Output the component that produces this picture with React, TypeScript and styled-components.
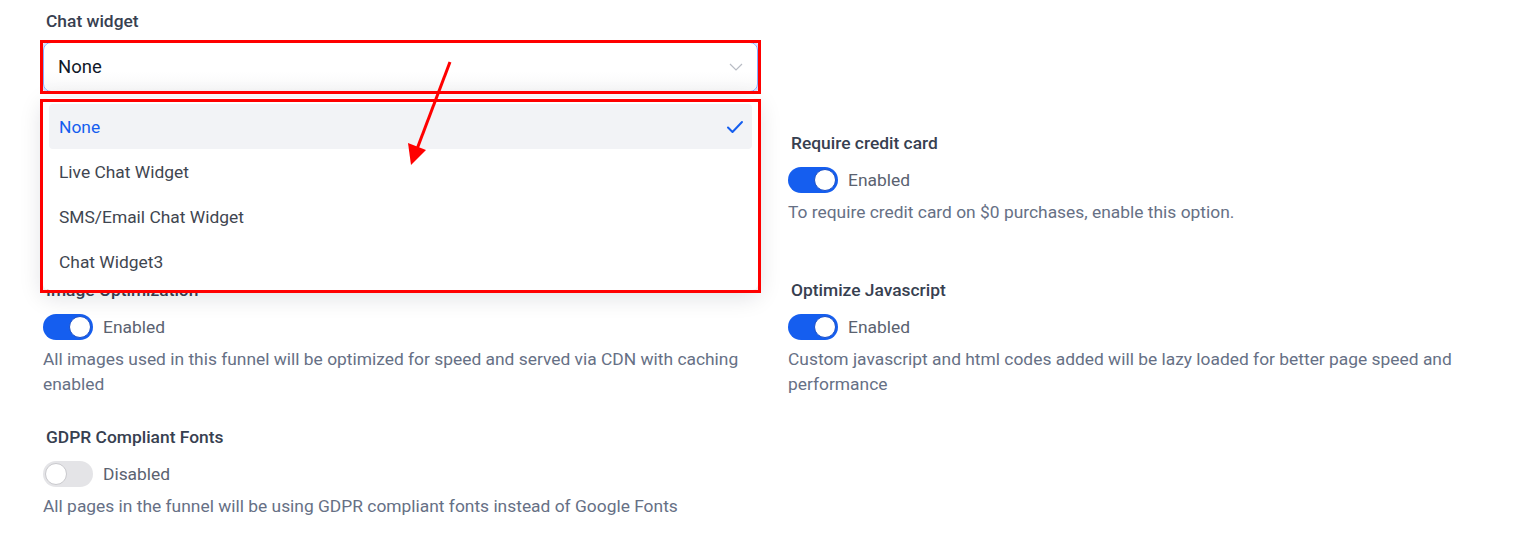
import React from "react";
import styled, { createGlobalStyle } from "styled-components";

const GlobalStyle = createGlobalStyle`
  html, body {
    margin: 0;
    padding: 0;
    background: #ffffff;
    font-family: Roboto, "Noto Sans", sans-serif;
  }
`;

const Page = styled.div`
  position: relative;
  width: 1528px;
  height: 548px;
  overflow: hidden;
  padding: 11px 0 0 43px;
  box-sizing: border-box;
`;

const Grid = styled.div`
  display: grid;
  grid-template-columns: 715px 715px;
  column-gap: 30px;
  row-gap: 30px;
`;

const Field = styled.div<{ $wide?: boolean; $covered?: boolean }>`
  display: flex;
  flex-direction: column;
  margin-bottom: ${(p) => (p.$wide ? "11px" : "0")};
  visibility: ${(p) => (p.$covered ? "hidden" : "visible")};
`;

const Label = styled.div`
  font-size: 17.4px;
  line-height: 20px;
  font-weight: 500;
  color: #374050;
  padding-left: 3px;
`;

const SelectWrap = styled.div`
  position: relative;
  margin-top: 11px;
`;

const SelectBox = styled.div`
  height: 50px;
  box-sizing: border-box;
  border: 1px solid #84adff;
  border-radius: 8px;
  box-shadow: 0 0 0 2px #d1e0ff;
  background: linear-gradient(#ffffff 60%, #f7f7f8);
  display: flex;
  align-items: center;
  justify-content: space-between;
  padding: 0 14px 0 14px;
  font-size: 18.5px;
  color: #101828;
`;

const Menu = styled.div`
  position: absolute;
  left: 0;
  right: 0;
  top: 56px;
  z-index: 5;
  background: #ffffff;
  border-radius: 6px;
  box-shadow: 0 6px 24px rgba(16, 24, 40, 0.14);
  padding: 6px;
  box-sizing: border-box;
`;

const Option = styled.div<{ $active?: boolean }>`
  height: 45px;
  display: flex;
  align-items: center;
  justify-content: space-between;
  padding: 0 8px 0 10px;
  border-radius: 4px;
  font-size: 17.4px;
  color: ${(p) => (p.$active ? "#155eef" : "#3f4650")};
  background: ${(p) => (p.$active ? "#f2f3f6" : "transparent")};
`;

const ToggleRow = styled.div`
  display: flex;
  align-items: center;
  gap: 10px;
  margin-top: 14px;
  font-size: 17.4px;
  color: #5a6270;
`;

const Track = styled.div<{ $on: boolean }>`
  width: 50px;
  height: 26px;
  border-radius: 13px;
  background: ${(p) => (p.$on ? "#155eef" : "#e4e4e7")};
  display: flex;
  align-items: center;
  justify-content: ${(p) => (p.$on ? "flex-end" : "flex-start")};
  padding: 0 2px;
  box-sizing: border-box;
`;

const Knob = styled.div<{ $on: boolean }>`
  width: 22px;
  height: 22px;
  border-radius: 50%;
  background: #ffffff;
  box-sizing: border-box;
  border: 1px solid ${(p) => (p.$on ? "#1a4fc7" : "#c9c9cd")};
`;

const Desc = styled.div`
  margin-top: 7px;
  font-size: 17.4px;
  line-height: 25px;
  color: #667085;
`;

const Highlight = styled.div<{ $top: number; $height: number }>`
  position: absolute;
  left: 40px;
  width: 721px;
  top: ${(p) => p.$top}px;
  height: ${(p) => p.$height}px;
  border: 3px solid #ff0000;
  box-sizing: border-box;
  z-index: 10;
  pointer-events: none;
`;

const Arrow = styled.svg`
  position: absolute;
  left: 400px;
  top: 55px;
  z-index: 11;
`;

const Chevron = () => (
  <svg width="14" height="8" viewBox="0 0 14 8" fill="none">
    <path d="M1 1l6 6 6-6" stroke="#b8bcc4" strokeWidth="1.2" />
  </svg>
);

const Check = () => (
  <svg width="18" height="14" viewBox="0 0 18 14" fill="none">
    <path d="M2 7.5l4.5 4.5L16 2" stroke="#155eef" strokeWidth="2" strokeLinecap="round" strokeLinejoin="round" />
  </svg>
);

interface SettingProps {
  label: string;
  on: boolean;
  desc: string;
  covered?: boolean;
}

const Setting = ({ label, on, desc, covered }: SettingProps) => (
  <Field $covered={covered} aria-hidden={covered}>
    <Label>{label}</Label>
    <ToggleRow>
      <Track $on={on}>
        <Knob $on={on} />
      </Track>
      {on ? "Enabled" : "Disabled"}
    </ToggleRow>
    <Desc>{desc}</Desc>
  </Field>
);

const options = ["None", "Live Chat Widget", "SMS/Email Chat Widget", "Chat Widget3"];

const App = () => {
  return (
    <>
      <GlobalStyle />
      <Page>
        <Grid>
          <Field $wide>
            <Label>Chat widget</Label>
            <SelectWrap>
              <SelectBox>
                None
                <Chevron />
              </SelectBox>
              <Menu>
                {options.map((o, i) => (
                  <Option key={o} $active={i === 0}>
                    {o}
                    {i === 0 && <Check />}
                  </Option>
                ))}
              </Menu>
            </SelectWrap>
          </Field>
          <div />
          {/* sits under the open menu */}
          <Setting
            covered
            label="Page Speed Optimization"
            on={true}
            desc="Pages in this funnel will be optimized for speed by deferring non critical resources and scripts until they are needed"
          />
          <Setting
            label="Require credit card"
            on={true}
            desc="To require credit card on $0 purchases, enable this option."
          />
          <Setting
            label="Image Optimization"
            on={true}
            desc="All images used in this funnel will be optimized for speed and served via CDN with caching enabled"
          />
          <Setting
            label="Optimize Javascript"
            on={true}
            desc="Custom javascript and html codes added will be lazy loaded for better page speed and performance"
          />
          <Setting
            label="GDPR Compliant Fonts"
            on={false}
            desc="All pages in the funnel will be using GDPR compliant fonts instead of Google Fonts"
          />
        </Grid>
        <Highlight $top={40} $height={54} />
        <Highlight $top={99} $height={194} />
        <Arrow width="60" height="120" viewBox="0 0 60 120">
          <line x1="50" y1="7" x2="17" y2="94" stroke="#ff0000" strokeWidth="3" />
          <polygon points="11,110 8,88 26,95" fill="#ff0000" />
        </Arrow>
      </Page>
    </>
  );
};

export default App;
